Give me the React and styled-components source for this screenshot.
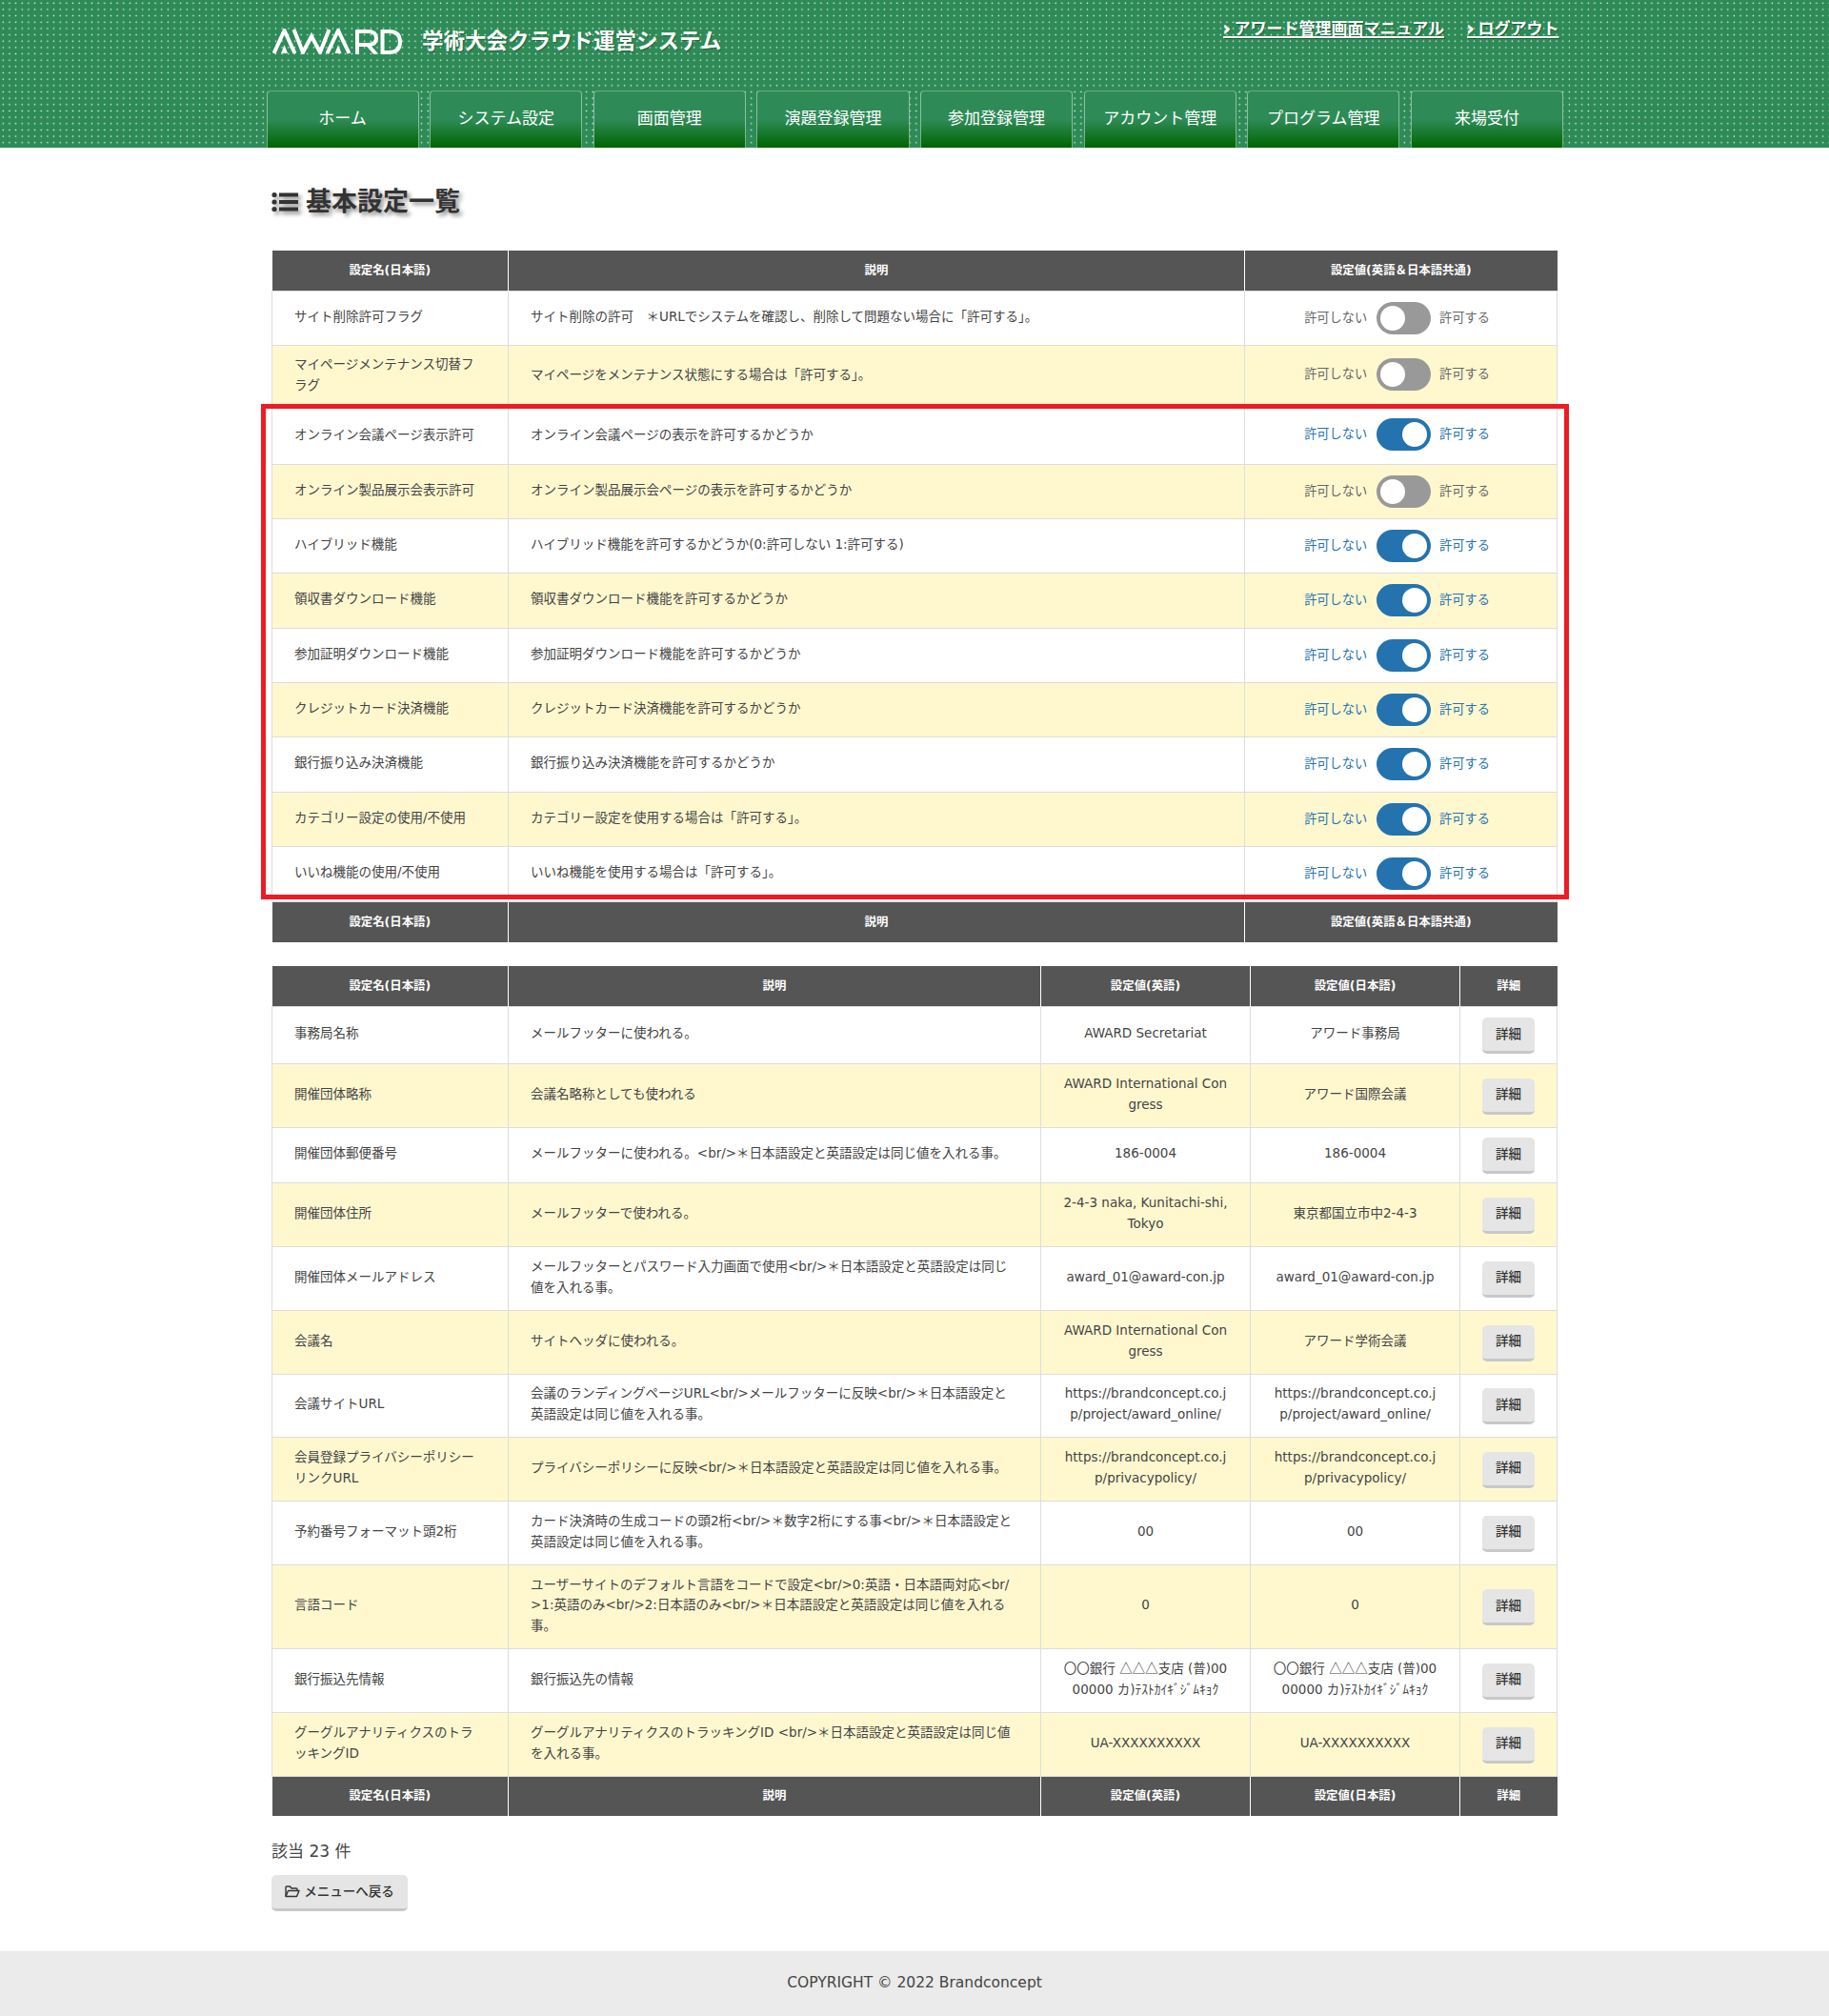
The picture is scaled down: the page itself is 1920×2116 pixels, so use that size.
import React from "react";
import styled, { createGlobalStyle } from "styled-components";

const Global = createGlobalStyle`
  html, body { margin: 0; padding: 0; background: #fff; }
  body { font-family: "DejaVu Sans", "Noto Sans CJK JP", sans-serif; font-size: 13.5px; line-height: 1.6; color: #444; }
  * { box-sizing: border-box; }
`;

const Header = styled.header`
  height: 155px;
  background-color: #2e8b57;
  background-image: radial-gradient(circle at 3.3px 3.3px, rgba(255,255,255,.95) 0, rgba(255,255,255,.8) 0.7px, transparent 1.05px);
  background-size: 6.667px 6.667px;
`;
const HeaderInner = styled.div`
  width: 1350px;
  margin: 0 auto;
  display: flex;
  flex-direction: column;
  height: 100%;
`;
const TopRow = styled.div`
  height: 95px;
  display: flex;
  justify-content: space-between;
  align-items: flex-start;
`;
const Brand = styled.div`
  display: flex;
  align-items: center;
  gap: 21px;
  padding: 26px 0 0 1px;
`;
const SiteName = styled.h1`
  margin: 0;
  font-size: 22.5px;
  line-height: 34px;
  font-weight: 700;
  color: #fff;
  text-shadow: 1px 1px 1px rgba(0,0,0,.3);
`;
const TopLinks = styled.div`
  display: flex;
  gap: 24px;
  padding: 16px 0 0;
  margin-right: -1.5px;
`;
const TopLink = styled.a`
  color: #fff;
  font-size: 17px;
  line-height: 28px;
  font-weight: 700;
  text-decoration: underline;
  text-decoration-thickness: 2px;
  text-underline-offset: 2px;
  text-shadow: 1px 1px 1px rgba(0,0,0,.35);
`;
const Chevron = styled.span`
  -webkit-text-stroke: 0.8px #fff;
  margin-right: -1.5px;
`;
const Nav = styled.nav`
  display: flex;
  gap: 11.5px;
  margin-left: -5.5px;
  margin-right: -6px;
`;
const Tab = styled.a`
  flex: 1;
  height: 60px;
  padding-bottom: 2px;
  display: flex;
  align-items: center;
  justify-content: center;
  color: #fff;
  font-size: 17px;
  border: 1px solid rgba(255,255,255,.45);
  border-bottom: 0;
  border-radius: 4px 4px 0 0;
  background: linear-gradient(to bottom, #2e8b57 0%, #2e8b57 50%, #006400 100%);
`;
const Main = styled.main`
  width: 1350px;
  margin: 0 auto;
  position: relative;
  padding-top: 32px;
`;
const Title = styled.h2`
  margin: 0 0 27px;
  height: 49px;
  display: flex;
  align-items: center;
  gap: 8px;
  font-size: 27px;
  line-height: 49px;
  font-weight: 700;
  color: #333;
  text-shadow: 3px 3px 4px rgba(0,0,0,.45);
  svg { filter: drop-shadow(3px 3px 2px rgba(0,0,0,.45)); }
`;
const Table = styled.table`
  width: 1349px;
  table-layout: fixed;
  border-collapse: collapse;
  margin-bottom: ${p => p.$mb || 0}px;
`;
const Th = styled.th`
  height: ${p => p.$h || 42}px;
  padding: 0;
  background: #555;
  color: #fff;
  font-size: 12.4px;
  font-weight: 700;
  text-align: center;
  border-left: 1px solid #fff;
  &:first-child { border-left: 0; }
`;
const Row = styled.tr`
  height: ${p => p.$h}px;
  background: ${p => p.$alt ? "#fff8cf" : "#fff"};
`;
const Td = styled.td`
  padding-top: ${p => p.$top || 0}px;
  padding-bottom: ${p => p.$bottom || 0}px;
  padding-left: ${p => p.$center ? 22 : 23}px;
  padding-right: ${p => p.$center ? 22 : 25}px;
  border: 1px solid #ddd;
  text-align: ${p => p.$center ? "center" : "left"};
  word-break: break-all;
`;
const Value = styled.div`
  display: flex;
  align-items: center;
  justify-content: center;
  gap: 9.5px;
  padding-right: 6px;
  color: ${p => p.$on ? "#2473ae" : "#666"};
  font-size: 13.2px;
`;
const Switch = styled.span`
  position: relative;
  width: 57px;
  height: 34px;
  border-radius: 17px;
  background: ${p => p.$on ? "#2473ae" : "#999"};
  &::after {
    content: "";
    position: absolute;
    top: 4px;
    left: ${p => p.$on ? 27 : 4}px;
    width: 26px;
    height: 26px;
    border-radius: 50%;
    background: #fff;
  }
`;
const Button = styled.a`
  display: inline-flex;
  align-items: center;
  justify-content: center;
  gap: 4px;
  height: 38px;
  width: ${p => p.$w || 55}px;
  margin-top: ${p => p.$mt || 0}px;
  vertical-align: middle;
  color: #333;
  font-size: 13.5px;
  font-weight: 500;
  background: #e5e5e5;
  border-radius: 5px;
  border-bottom: 3px solid #c8c8c8;
`;
const Glyph = styled.span`
  font-family: "Noto Sans CJK JP", sans-serif;
`;
const Count = styled.p`
  margin: 24px 0 0;
  font-size: 17px;
  line-height: 27px;
  color: #444;
`;
const BackRow = styled.div`
  margin-top: 11px;
  height: 56px;
`;
const Footer = styled.footer`
  margin-top: 24px;
  height: 70px;
  padding-bottom: 4px;
  background: #ebebeb;
  display: flex;
  align-items: center;
  justify-content: center;
  font-size: 15.5px;
  color: #444;
`;
const Highlight = styled.div`
  position: absolute;
  left: -11px;
  top: 269px;
  width: 1373px;
  height: 520px;
  border: 5px solid #ed1c24;
  pointer-events: none;
`;

const Logo = () => (
  <svg width="136" height="27" viewBox="0 0 136 27" fill="none" stroke="#fff" strokeWidth="4" aria-label="AWARD">
    <path d="M1.5 26 L12.5 2 L23.5 26" />
    <path d="M9 26 L12.5 17 L16 26 Z" fill="#fff" stroke="none" />
    <path d="M22.5 1 L32 25 L41 8 L50 25 L59.5 1" />
    <path d="M57.5 26 L69 2 L80.5 26" />
    <path d="M65.5 26 L69 17 L72.5 26 Z" fill="#fff" stroke="none" />
    <path d="M89 27 V3 H100 Q109 3 109 10 Q109 17 100 17 H89 M100 17 L109 27" />
    <path d="M115.5 3 V25 H122 Q134 25 134 14 Q134 3 122 3 Z" />
  </svg>
);
const ListIcon = () => (
  <svg width="28" height="22" viewBox="0 0 28 22" fill="#333">
    <circle cx="3" cy="3.5" r="2.6" /><circle cx="3" cy="11" r="2.6" /><circle cx="3" cy="18.5" r="2.6" />
    <rect x="8" y="1.5" width="20" height="4" /><rect x="8" y="9" width="20" height="4" /><rect x="8" y="16.5" width="20" height="4" />
  </svg>
);
const FolderIcon = () => (
  <svg width="16" height="13" viewBox="0 0 16 13" fill="none" stroke="#333" strokeWidth="1.4" strokeLinejoin="round">
    <path d="M1 11.5 V2 Q1 1 2 1 H5.5 L7 3 H12 Q13 3 13 4 V5.5" />
    <path d="M1 11.5 L3.5 5.5 H15 L12.5 11.5 Z" />
  </svg>
);

const flags = [
  ["サイト削除許可フラグ", "サイト削除の許可　＊URLでシステムを確認し、削除して問題ない場合に「許可する」。", false, 57],
  ["マイページメンテナンス切替フラグ", "マイページをメンテナンス状態にする場合は「許可する」。", false, 62],
  ["オンライン会議ページ表示許可", "オンライン会議ページの表示を許可するかどうか", true, 63],
  ["オンライン製品展示会表示許可", "オンライン製品展示会ページの表示を許可するかどうか", false, 57],
  ["ハイブリッド機能", "ハイブリッド機能を許可するかどうか(0:許可しない 1:許可する)", true, 57],
  ["領収書ダウンロード機能", "領収書ダウンロード機能を許可するかどうか", true, 58],
  ["参加証明ダウンロード機能", "参加証明ダウンロード機能を許可するかどうか", true, 57],
  ["クレジットカード決済機能", "クレジットカード決済機能を許可するかどうか", true, 57],
  ["銀行振り込み決済機能", "銀行振り込み決済機能を許可するかどうか", true, 58],
  ["カテゴリー設定の使用/不使用", "カテゴリー設定を使用する場合は「許可する」。", true, 57],
  ["いいね機能の使用/不使用", "いいね機能を使用する場合は「許可する」。", true, 58],
];

const bank = <>〇〇銀行 <Glyph>△△△</Glyph>支店 (普)0000000 カ)ﾃｽﾄｶｲｷﾞｼﾞﾑｷｮｸ</>;

const settings = [
  ["事務局名称", "メールフッターに使われる。", "AWARD Secretariat", "アワード事務局", 60],
  ["開催団体略称", "会議名略称としても使われる", "AWARD International Congress", "アワード国際会議", 67],
  ["開催団体郵便番号", "メールフッターに使われる。<br/>＊日本語設定と英語設定は同じ値を入れる事。", "186-0004", "186-0004", 58],
  ["開催団体住所", "メールフッターで使われる。", "2-4-3 naka, Kunitachi-shi, Tokyo", "東京都国立市中2-4-3", 67],
  ["開催団体メールアドレス", "メールフッターとパスワード入力画面で使用<br/>＊日本語設定と英語設定は同じ値を入れる事。", "award_01@award-con.jp", "award_01@award-con.jp", 67],
  ["会議名", "サイトヘッダに使われる。", "AWARD International Congress", "アワード学術会議", 67],
  ["会議サイトURL", "会議のランディングページURL<br/>メールフッターに反映<br/>＊日本語設定と英語設定は同じ値を入れる事。", "https://brandconcept.co.jp/project/award_online/", "https://brandconcept.co.jp/project/award_online/", 66],
  ["会員登録プライバシーポリシーリンクURL", "プライバシーポリシーに反映<br/>＊日本語設定と英語設定は同じ値を入れる事。", "https://brandconcept.co.jp/privacypolicy/", "https://brandconcept.co.jp/privacypolicy/", 67],
  ["予約番号フォーマット頭2桁", "カード決済時の生成コードの頭2桁<br/>＊数字2桁にする事<br/>＊日本語設定と英語設定は同じ値を入れる事。", "00", "00", 67],
  ["言語コード", "ユーザーサイトのデフォルト言語をコードで設定<br/>0:英語・日本語両対応<br/>1:英語のみ<br/>2:日本語のみ<br/>＊日本語設定と英語設定は同じ値を入れる事。", "0", "0", 88],
  ["銀行振込先情報", "銀行振込先の情報", bank, bank, 67],
  ["グーグルアナリティクスのトラッキングID", "グーグルアナリティクスのトラッキングID <br/>＊日本語設定と英語設定は同じ値を入れる事。", "UA-XXXXXXXXXX", "UA-XXXXXXXXXX", 67],
];

const tabs = ["ホーム", "システム設定", "画面管理", "演題登録管理", "参加登録管理", "アカウント管理", "プログラム管理", "来場受付"];

const Head1 = ({ h }) => (
  <tr>
    <Th $h={h}>設定名(日本語)</Th>
    <Th $h={h}>説明</Th>
    <Th $h={h}>設定値(英語＆日本語共通)</Th>
  </tr>
);
const Head2 = () => (
  <tr>
    <Th>設定名(日本語)</Th>
    <Th>説明</Th>
    <Th>設定値(英語)</Th>
    <Th>設定値(日本語)</Th>
    <Th>詳細</Th>
  </tr>
);

export default function App() {
  return (
    <>
      <Global />
      <Header>
        <HeaderInner>
          <TopRow>
            <Brand>
              <Logo />
              <SiteName>学術大会クラウド運営システム</SiteName>
            </Brand>
            <TopLinks>
              <TopLink><Chevron>›</Chevron> アワード管理画面マニュアル</TopLink>
              <TopLink><Chevron>›</Chevron> ログアウト</TopLink>
            </TopLinks>
          </TopRow>
          <Nav>
            {tabs.map(t => <Tab key={t}>{t}</Tab>)}
          </Nav>
        </HeaderInner>
      </Header>
      <Main>
        <Title><ListIcon />基本設定一覧</Title>
        <Table $mb={25}>
          <colgroup><col width="248" /><col width="773" /><col width="328" /></colgroup>
          <thead><Head1 /></thead>
          <tbody>
            {flags.map(([n, d, on, h], i) => {
              const tall = h >= 62;
              return (
                <Row key={n} $alt={i % 2 === 1} $h={h}>
                  <Td $top={tall ? 2 : 0} $bottom={tall ? 0 : 2}>{n}</Td>
                  <Td $top={tall ? 2 : 0} $bottom={tall ? 0 : 2}>{d}</Td>
                  <Td>
                    <Value $on={on}>許可しない<Switch $on={on} />許可する</Value>
                  </Td>
                </Row>
              );
            })}
          </tbody>
          <tfoot><Head1 h={43} /></tfoot>
        </Table>
        <Table>
          <colgroup><col width="248" /><col width="559" /><col width="220" /><col width="220" /><col width="102" /></colgroup>
          <thead><Head2 /></thead>
          <tbody>
            {settings.map(([n, d, en, ja, h], i) => (
              <Row key={n} $alt={i % 2 === 1} $h={h}>
                <Td $bottom={2}>{n}</Td>
                <Td $bottom={2}>{d}</Td>
                <Td $center $bottom={2}>{en}</Td>
                <Td $center $bottom={2}>{ja}</Td>
                <Td $center><Button $mt={2}>詳細</Button></Td>
              </Row>
            ))}
          </tbody>
          <tfoot><Head2 /></tfoot>
        </Table>
        <Count>該当 23 件</Count>
        <BackRow><Button $w={143}><FolderIcon />メニューへ戻る</Button></BackRow>
        <Highlight />
      </Main>
      <Footer>COPYRIGHT © 2022 Brandconcept</Footer>
    </>
  );
}
